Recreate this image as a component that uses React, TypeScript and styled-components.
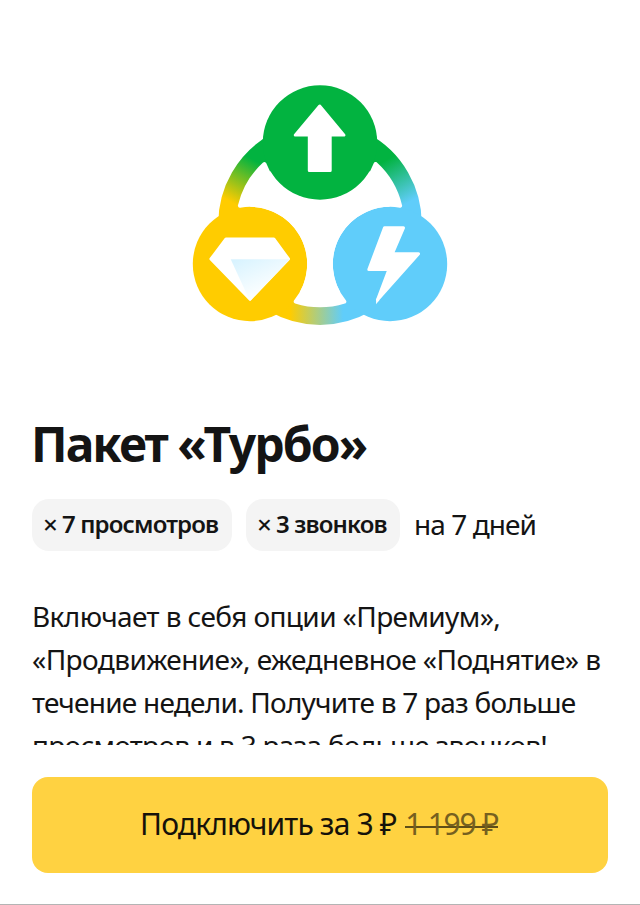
import React from "react";
import styled, { createGlobalStyle } from "styled-components";

const GlobalStyle = createGlobalStyle`
  *, *::before, *::after { box-sizing: border-box; }
  body { margin: 0; background: #fff; }
`;

const Sheet = styled.main`
  display: flex;
  flex-direction: column;
  width: 640px;
  height: 905px;
  overflow: hidden;
  background: #fff;
  border-bottom: 1px solid #b4b4b4;
  color: #141414;
  font-family: "Noto Sans", "Open Sans", sans-serif;
`;

const Content = styled.section`
  height: 745px;
  flex: none;
  overflow: hidden;
  padding: 0 32px;
`;

const Hero = styled.div`
  display: flex;
  justify-content: center;
  padding-top: 75px;
  height: 416px;
`;

const Emblem = styled.svg`
  width: 280px;
  height: 260px;
  flex: none;
`;

const Title = styled.h1`
  margin: 0 0 0 -1px;
  height: 83px;
  font-size: 48px;
  line-height: 56px;
  font-weight: 700;
  letter-spacing: -1.95px;
  white-space: nowrap;
`;

const Benefits = styled.div`
  display: flex;
  gap: 14px;
  height: 52px;
`;

const Chip = styled.div<{ $width: number }>`
  display: flex;
  width: ${(p) => p.$width}px;
  padding-left: 11px;
  border-radius: 17px;
  background: #f4f4f4;
  font-size: 24px;
  line-height: 50px;
  font-weight: 600;
  letter-spacing: -0.85px;
  white-space: nowrap;
`;

const Times = styled.span`
  width: 19px;
  flex: none;
  font-size: 26px;
  font-weight: 500;
`;

const Period = styled.span`
  font-size: 28px;
  line-height: 50px;
  letter-spacing: -0.94px;
  white-space: nowrap;
`;

const Description = styled.p`
  margin: 44px 0 0;
  font-size: 28px;
  line-height: 43px;
`;

const Line = styled.span<{ $tracking: number }>`
  display: block;
  letter-spacing: ${(p) => p.$tracking}px;
  white-space: nowrap;
`;

const Footer = styled.footer`
  padding: 32px 32px 0;
`;

const BuyButton = styled.button`
  display: flex;
  align-items: center;
  width: 100%;
  height: 96px;
  padding: 0 0 3px 108px;
  border: 0;
  border-radius: 16px;
  background: #ffd241;
  color: #15120a;
  font: 400 30px/40px "Noto Sans", "Open Sans", sans-serif;
  letter-spacing: -0.86px;
  white-space: nowrap;
`;

const OldPrice = styled.s`
  display: flex;
  align-items: center;
  margin-left: 9px;
  width: 93px;
  color: #76601f;
  letter-spacing: -1.28px;
  text-decoration: none;
  background: linear-gradient(#5f4e18, #5f4e18) 0 22px / 93px 2px no-repeat;
`;

const GREEN = "#02b340";
const YELLOW = "#ffcc00";
const BLUE = "#60cdfa";

function TurboEmblem() {
  return (
    <Emblem viewBox="180 75 280 260" aria-hidden="true">
      <defs>
        <linearGradient id="left" gradientUnits="userSpaceOnUse" x1="252" y1="159" x2="229" y2="201">
          <stop offset="0" stopColor={GREEN} />
          <stop offset="1" stopColor={YELLOW} />
        </linearGradient>
        <linearGradient id="right" gradientUnits="userSpaceOnUse" x1="388" y1="159" x2="411" y2="201">
          <stop offset="0" stopColor={GREEN} />
          <stop offset="1" stopColor={BLUE} />
        </linearGradient>
        <linearGradient id="bottom" gradientUnits="userSpaceOnUse" x1="290" y1="316" x2="343" y2="316">
          <stop offset="0" stopColor={YELLOW} />
          <stop offset="1" stopColor={BLUE} />
        </linearGradient>
        <linearGradient id="facet" gradientUnits="userSpaceOnUse" x1="238" y1="259" x2="256" y2="299">
          <stop offset="0" stopColor="#d8f3ff" />
          <stop offset="1" stopColor="#fff" />
        </linearGradient>
      </defs>
      <g fill="none" strokeWidth="30">
        <path d="M320 136.6A86.7 86.7 0 0 0 244.9 266.6" stroke="url(#left)" />
        <path d="M320 136.6A86.7 86.7 0 0 1 395.1 266.6" stroke="url(#right)" />
        <path d="M244.9 266.6A86.7 86.7 0 0 0 395.1 266.6" stroke="url(#bottom)" />
      </g>
      <circle cx="320" cy="142.5" r="57.2" fill={GREEN} />
      <circle cx="250" cy="264" r="57.2" fill={YELLOW} />
      <circle cx="390" cy="264" r="57.2" fill={BLUE} />
      <path
        d="M264.4 164A59.2 59.2 0 0 0 375.6 164A82 82 0 0 1 400.1 205.7A59.2 59.2 0 0 0 344.3 301.6A82 82 0 0 1 295.7 301.6A59.2 59.2 0 0 0 239.9 205.7A82 82 0 0 1 264.4 164Z"
        fill="#fff"
        stroke="#fff"
        strokeWidth="4"
        strokeLinejoin="round"
      />
      <g fill="#fff" stroke="#fff" strokeWidth="3" strokeLinejoin="round">
        <path d="M319.7 106L344 135.1H330.2V170.6H309.3V135.1H295.2Z" />
        <path d="M226 239H273.8L288.5 259L250 299.2L210.9 259Z" />
        <path d="M384.5 227.8H403.5L392.3 253.8H418.6L377.4 300L388.9 269.5H368.8Z" />
      </g>
      <path d="M376 304.3L376.2 298.5L379.5 299.9Z" fill="#fff" />
      <path d="M230.7 259.2H289.8L250 301Z" fill="url(#facet)" />
    </Emblem>
  );
}

export default function App() {
  return (
    <>
      <GlobalStyle />
      <Sheet>
        <Content>
          <Hero>
            <TurboEmblem />
          </Hero>
          <Title>Пакет «Турбо»</Title>
          <Benefits>
            <Chip $width={200}>
              <Times>×</Times>7 просмотров
            </Chip>
            <Chip $width={154}>
              <Times>×</Times>3 звонков
            </Chip>
            <Period>на 7 дней</Period>
          </Benefits>
          <Description>
            <Line $tracking={-0.6}>Включает в себя опции «Премиум»,</Line>
            <Line $tracking={-0.59}>«Продвижение», ежедневное «Поднятие» в</Line>
            <Line $tracking={-0.76}>течение недели. Получите в 7 раз больше</Line>
            <Line $tracking={-0.74}>просмотров и в 3 раза больше звонков!</Line>
          </Description>
        </Content>
        <Footer>
          <BuyButton type="button">
            Подключить за 3 ₽<OldPrice>1 199 ₽</OldPrice>
          </BuyButton>
        </Footer>
      </Sheet>
    </>
  );
}
